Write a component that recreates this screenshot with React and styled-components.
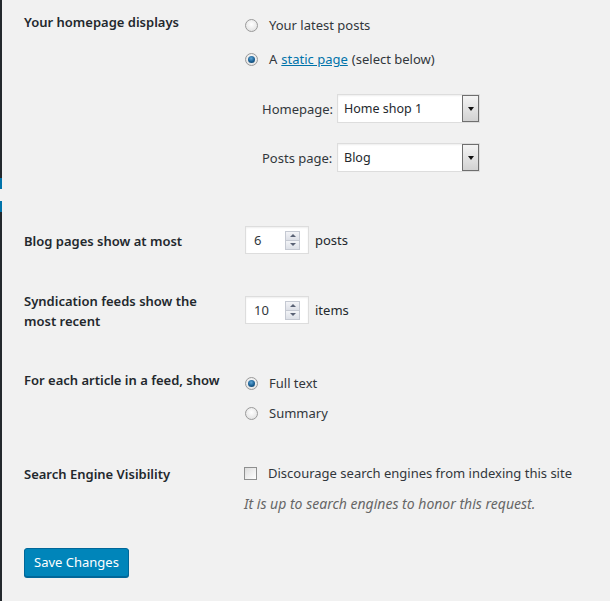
import React from "react";
import styled, { createGlobalStyle } from "styled-components";

const Global = createGlobalStyle`
  html, body { margin: 0; padding: 0; background: #f1f1f1; }
  body { font-family: "Noto Sans", "Open Sans", sans-serif; font-size: 13px; color: #23282d; }
`;

const Shell = styled.div`
  display: flex;
  min-height: 601px;
  background: #f1f1f1;
`;

const Sidebar = styled.div`
  width: 2px;
  flex: none;
  background: #23282d;
  display: flex;
  flex-direction: column;
  padding-top: 178px;
`;

const SideActive = styled.div`
  height: ${(p) => p.$h}px;
  background: ${(p) => p.$c};
`;

const Main = styled.div`
  flex: 1;
  padding: 12px 0 0 22px;
`;

const Row = styled.div`
  display: flex;
  align-items: flex-start;
  margin-top: ${(p) => p.$top || 0}px;
`;

const Label = styled.div`
  width: 208px;
  flex: none;
  padding-right: 12px;
  font-weight: 600;
  line-height: 20px;
  padding-top: ${(p) => p.$pt || 0}px;
`;

const Field = styled.div`
  display: flex;
  flex-direction: column;
  padding-top: ${(p) => p.$pt || 0}px;
  color: #32373c;
`;

const Choice = styled.label`
  display: flex;
  align-items: center;
  line-height: 20px;
  white-space: nowrap;
  margin-top: ${(p) => p.$top || 0}px;
`;

const Radio = styled.span`
  width: 11px;
  height: 11px;
  border-radius: 50%;
  border: 1px solid #9a9a9a;
  background: radial-gradient(circle at 50% 40%, #ffffff 0%, #e6e6e6 70%, #d6d6d6 100%);
  margin: 0 11px 0 1px;
  display: flex;
  align-items: center;
  justify-content: center;
  flex: none;
  &::after {
    content: "";
    display: ${(p) => (p.$on ? "block" : "none")};
    width: 7px;
    height: 7px;
    border-radius: 50%;
    background: radial-gradient(circle at 45% 35%, #5fa6d6 0%, #1a5f93 55%, #0b3556 100%);
  }
`;

const Check = styled.span`
  width: 11px;
  height: 11px;
  border: 1px solid #8e8f8f;
  background: linear-gradient(135deg, #dcdcdc, #ffffff);
  margin: 0 11px 0 0;
  flex: none;
`;

const Link = styled.a`
  color: #0073aa;
  text-decoration: underline;
  margin: 0 4px;
`;

const SelectRow = styled.div`
  display: flex;
  align-items: center;
  margin: ${(p) => p.$top}px 0 0 18px;
`;

const SelectLabel = styled.span`
  width: 75px;
  flex: none;
  white-space: nowrap;
  line-height: 20px;
`;

const Select = styled.div`
  height: 27px;
  background: #fff;
  border: 1px solid #ddd;
  box-shadow: inset 0 1px 2px rgba(0, 0, 0, 0.07);
  display: flex;
  align-items: center;
  justify-content: space-between;
  font-size: 12.5px;
  color: #23282d;
  padding-left: 6px;
  box-sizing: content-box;
  width: 135px;
`;

const DropBtn = styled.span`
  width: 15px;
  height: 25px;
  border: 1px solid #6f6f6f;
  background: linear-gradient(#f4f4f4, #d2d2d2);
  display: flex;
  align-items: center;
  justify-content: center;
  &::after {
    content: "";
    border-left: 3px solid transparent;
    border-right: 3px solid transparent;
    border-top: 4px solid #111;
  }
`;

const Inline = styled.div`
  display: flex;
  align-items: center;
  margin-top: ${(p) => p.$top || 0}px;
`;

const NumberBox = styled.div`
  width: 54px;
  height: 26px;
  padding-left: 8px;
  margin-left: 1px;
  background: #fff;
  border: 1px solid #ddd;
  box-shadow: inset 0 1px 2px rgba(0, 0, 0, 0.07);
  display: flex;
  align-items: center;
  justify-content: space-between;
  color: #32373c;
  margin-right: 6px;
  box-sizing: content-box;
`;

const Spinner = styled.span`
  width: 13px;
  height: 17px;
  margin-right: 8px;
  display: flex;
  flex-direction: column;
  border: 1px solid #c5c9d2;
  background: #e9ebf0;
`;

const SpinHalf = styled.span`
  flex: 1;
  display: flex;
  align-items: center;
  justify-content: center;
  background: linear-gradient(#f3f4f7, #dde0e7);
  & + & { border-top: 1px solid #c5c9d2; }
  &::after {
    content: "";
    border-left: 3px solid transparent;
    border-right: 3px solid transparent;
    ${(p) => (p.$up ? "border-bottom: 3px solid #5a6275;" : "border-top: 3px solid #5a6275;")}
  }
`;

const Unit = styled.span`
  line-height: 20px;
`;

const Desc = styled.p`
  margin: 11px 0 0;
  font-style: italic;
  font-size: 14px;
  color: #666;
  line-height: 20px;
`;

const Button = styled.button`
  margin-top: 34px;
  height: 29px;
  padding: 0 9px;
  background: #0085ba;
  border: 1px solid #006799;
  border-radius: 3px;
  box-shadow: 0 1px 0 #006799;
  color: #fff;
  font-family: inherit;
  font-size: 13px;
  line-height: 25px;
  cursor: pointer;
`;

export default function App() {
  return (
    <>
      <Global />
      <Shell>
        <Sidebar>
          <SideActive $h={11} $c="#0073aa" />
          <SideActive $h={12} $c="#f1f1f1" />
          <SideActive $h={11} $c="#0073aa" />
        </Sidebar>
        <Main>
          <Row>
            <Label>Your homepage displays</Label>
            <Field $pt={3}>
              <Choice>
                <Radio />
                Your latest posts
              </Choice>
              <Choice $top={14}>
                <Radio $on />
                A <Link href="#">static page</Link> (select below)
              </Choice>
              <SelectRow $top={25}>
                <SelectLabel>Homepage:</SelectLabel>
                <Select>
                  Home shop 1
                  <DropBtn />
                </Select>
              </SelectRow>
              <SelectRow $top={20}>
                <SelectLabel>Posts page:</SelectLabel>
                <Select>
                  Blog
                  <DropBtn />
                </Select>
              </SelectRow>
            </Field>
          </Row>

          <Row $top={54}>
            <Label $pt={5}>Blog pages show at most</Label>
            <Inline>
              <NumberBox>
                6
                <Spinner>
                  <SpinHalf $up />
                  <SpinHalf />
                </Spinner>
              </NumberBox>
              <Unit>posts</Unit>
            </Inline>
          </Row>

          <Row $top={37}>
            <Label>Syndication feeds show the most recent</Label>
            <Inline $top={5}>
              <NumberBox>
                10
                <Spinner>
                  <SpinHalf $up />
                  <SpinHalf />
                </Spinner>
              </NumberBox>
              <Unit>items</Unit>
            </Inline>
          </Row>

          <Row $top={39}>
            <Label>For each article in a feed, show</Label>
            <Field $pt={3}>
              <Choice>
                <Radio $on />
                Full text
              </Choice>
              <Choice $top={10}>
                <Radio />
                Summary
              </Choice>
            </Field>
          </Row>

          <Row $top={40}>
            <Label $pt={1}>Search Engine Visibility</Label>
            <Field>
              <Choice>
                <Check />
                Discourage search engines from indexing this site
              </Choice>
              <Desc>It is up to search engines to honor this request.</Desc>
            </Field>
          </Row>

          <Button>Save Changes</Button>
        </Main>
      </Shell>
    </>
  );
}
